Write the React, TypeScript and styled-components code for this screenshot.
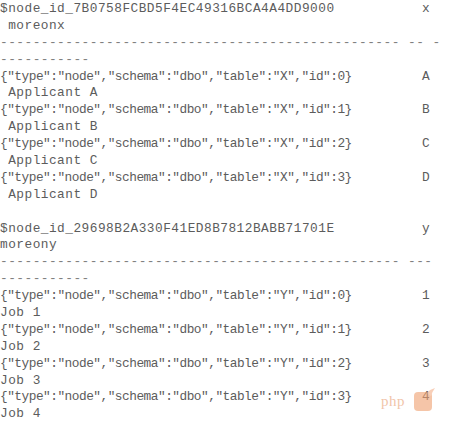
import React from "react";
import styled, { createGlobalStyle } from "styled-components";

const GlobalStyle = createGlobalStyle`
  html, body {
    margin: 0;
    padding: 0;
    background: #ffffff;
  }
`;

const Output = styled.div`
  position: relative;
  width: 450px;
  height: 424px;
  overflow: hidden;
  padding-top: 1px;
  box-sizing: border-box;
  font-family: "Courier New", "Liberation Mono", monospace;
  font-size: 12.8px;
  letter-spacing: 0.48px;
  line-height: 16.9px;
  color: #5c5c5c;
  white-space: pre;
`;

const Line = styled.div`
  height: 16.9px;
`;

const Rule = styled.div`
  height: 16.9px;
  color: #808080;
`;

const Row = styled.div`
  display: grid;
  grid-template-columns: 422px auto;
  height: 16.9px;
`;

const Json = styled.span`
  letter-spacing: -0.5px;
`;

const Watermark = styled.div`
  position: absolute;
  left: 381px;
  top: 387px;
  display: flex;
  align-items: center;
  gap: 4px;
  pointer-events: none;
`;

const WatermarkText = styled.span`
  font-family: "Liberation Serif", serif;
  font-size: 15px;
  color: #e58a55;
  opacity: 0.5;
  letter-spacing: 0.5px;
`;

const WatermarkIcon = styled.svg`
  width: 28px;
  height: 28px;
  opacity: 0.6;
`;

type Block = {
  id: string;
  col: string;
  more: string;
  rule2: string;
  table: string;
  rows: [string, string][];
};

const blocks: Block[] = [
  {
    id: "$node_id_7B0758FCBD5F4EC49316BCA4A4DD9000",
    col: "x",
    more: " moreonx",
    rule2: " -- -",
    table: "X",
    rows: [
      ["A", " Applicant A"],
      ["B", " Applicant B"],
      ["C", " Applicant C"],
      ["D", " Applicant D"],
    ],
  },
  {
    id: "$node_id_29698B2A330F41ED8B7812BABB71701E",
    col: "y",
    more: "moreony",
    rule2: " ---",
    table: "Y",
    rows: [
      ["1", "Job 1"],
      ["2", "Job 2"],
      ["3", "Job 3"],
      ["4", "Job 4"],
    ],
  },
];

const dashes = (n: number) => "-".repeat(n);

export default function App() {
  return (
    <>
      <GlobalStyle />
      <Output>
        {blocks.map((b, bi) => (
          <React.Fragment key={b.id}>
            {bi > 0 && <Line>{"\u00a0"}</Line>}
            <Row>
              <span>{b.id}</span>
              <span>{b.col}</span>
            </Row>
            <Line>{b.more}</Line>
            <Rule>{dashes(49) + b.rule2}</Rule>
            <Rule>{dashes(11)}</Rule>
            {b.rows.map(([key, name], i) => (
              <React.Fragment key={key}>
                <Row>
                  <Json>{`{"type":"node","schema":"dbo","table":"${b.table}","id":${i}}`}</Json>
                  <span>{key}</span>
                </Row>
                <Line>{name}</Line>
              </React.Fragment>
            ))}
          </React.Fragment>
        ))}
        <Watermark>
          <WatermarkText>php</WatermarkText>
          <WatermarkIcon viewBox="0 0 28 28">
            <path
              d="M5 9 Q5 5 9 5 L19 5 Q23 5 23 9 L23 20 Q23 24 19 24 L9 24 Q5 24 5 20 Z"
              fill="#f0a070"
            />
            <path d="M17 6 Q22 2 26 1 Q23 5 22 9 Z" fill="#f4b08a" />
          </WatermarkIcon>
        </Watermark>
      </Output>
    </>
  );
}
